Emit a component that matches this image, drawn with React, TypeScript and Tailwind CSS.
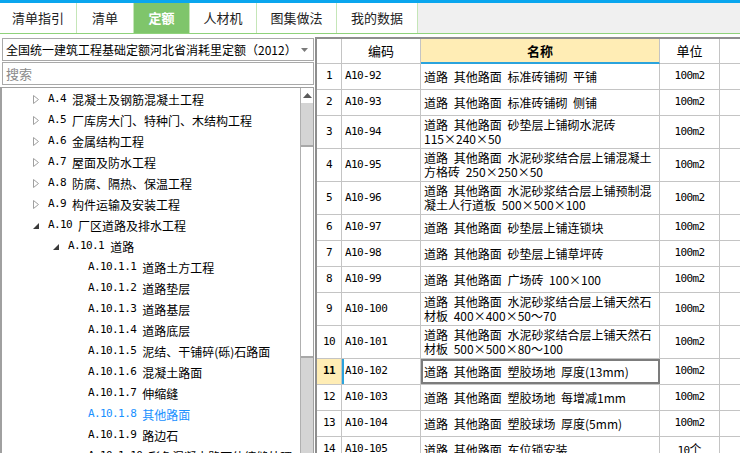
import React from "react";

const CJK = "[font-family:'Noto_Sans_CJK_SC',sans-serif]";
const MONO = "[font-family:'DejaVu_Sans_Mono',monospace] text-[11px] tracking-[-0.6px]";

const tabs = [
  { label: "清单指引", w: "w-[77px]" },
  { label: "清单", w: "w-[57px]" },
  { label: "定额", w: "w-[56px]", active: true },
  { label: "人材机", w: "w-[67px]" },
  { label: "图集做法", w: "w-[80px]" },
  { label: "我的数据", w: "w-[81px]" },
];

type TreeItem = {
  code: string;
  name: string;
  indent: string;
  state?: "closed" | "open";
  active?: boolean;
};

const tree: TreeItem[] = [
  { code: "A.4", name: "混凝土及钢筋混凝土工程", indent: "pl-[31px]", state: "closed" },
  { code: "A.5", name: "厂库房大门、特种门、木结构工程", indent: "pl-[31px]", state: "closed" },
  { code: "A.6", name: "金属结构工程", indent: "pl-[31px]", state: "closed" },
  { code: "A.7", name: "屋面及防水工程", indent: "pl-[31px]", state: "closed" },
  { code: "A.8", name: "防腐、隔热、保温工程", indent: "pl-[31px]", state: "closed" },
  { code: "A.9", name: "构件运输及安装工程", indent: "pl-[31px]", state: "closed" },
  { code: "A.10", name: "厂区道路及排水工程", indent: "pl-[31px]", state: "open" },
  { code: "A.10.1", name: "道路", indent: "pl-[51px]", state: "open" },
  { code: "A.10.1.1", name: "道路土方工程", indent: "pl-[86px]" },
  { code: "A.10.1.2", name: "道路垫层", indent: "pl-[86px]" },
  { code: "A.10.1.3", name: "道路基层", indent: "pl-[86px]" },
  { code: "A.10.1.4", name: "道路底层", indent: "pl-[86px]" },
  { code: "A.10.1.5", name: "泥结、干铺碎(砾)石路面", indent: "pl-[86px]" },
  { code: "A.10.1.6", name: "混凝土路面", indent: "pl-[86px]" },
  { code: "A.10.1.7", name: "伸缩缝", indent: "pl-[86px]" },
  { code: "A.10.1.8", name: "其他路面", indent: "pl-[86px]", active: true },
  { code: "A.10.1.9", name: "路边石", indent: "pl-[86px]" },
  { code: "A.10.1.10", name: "彩色混凝土路面伸缩缝处理", indent: "pl-[86px]" },
];

type Row = { no: number; code: string; lines: string[]; unit: string; selected?: boolean };

const rows: Row[] = [
  { no: 1, code: "A10-92", lines: ["道路 其他路面 标准砖铺砌 平铺"], unit: "100m2" },
  { no: 2, code: "A10-93", lines: ["道路 其他路面 标准砖铺砌 侧铺"], unit: "100m2" },
  { no: 3, code: "A10-94", lines: ["道路 其他路面 砂垫层上铺砌水泥砖", "115×240×50"], unit: "100m2" },
  { no: 4, code: "A10-95", lines: ["道路 其他路面 水泥砂浆结合层上铺混凝土", "方格砖 250×250×50"], unit: "100m2" },
  { no: 5, code: "A10-96", lines: ["道路 其他路面 水泥砂浆结合层上铺预制混", "凝土人行道板 500×500×100"], unit: "100m2" },
  { no: 6, code: "A10-97", lines: ["道路 其他路面 砂垫层上铺连锁块"], unit: "100m2" },
  { no: 7, code: "A10-98", lines: ["道路 其他路面 砂垫层上铺草坪砖"], unit: "100m2" },
  { no: 8, code: "A10-99", lines: ["道路 其他路面 广场砖 100×100"], unit: "100m2" },
  { no: 9, code: "A10-100", lines: ["道路 其他路面 水泥砂浆结合层上铺天然石", "材板 400×400×50～70"], unit: "100m2" },
  { no: 10, code: "A10-101", lines: ["道路 其他路面 水泥砂浆结合层上铺天然石", "材板 500×500×80～100"], unit: "100m2" },
  { no: 11, code: "A10-102", lines: ["道路 其他路面 塑胶场地 厚度(13mm)"], unit: "100m2", selected: true },
  { no: 12, code: "A10-103", lines: ["道路 其他路面 塑胶场地 每增减1mm"], unit: "100m2" },
  { no: 13, code: "A10-104", lines: ["道路 其他路面 塑胶球场 厚度(5mm)"], unit: "100m2" },
  { no: 14, code: "A10-105", lines: ["道路 其他路面 车位锁安装"], unit: "10个" },
];

function TreeRow({ item }: { item: TreeItem }) {
  return (
    <div className={`flex h-[21px] shrink-0 items-center whitespace-nowrap ${item.indent} ${item.active ? "text-[#1890ff]" : "text-black"}`}>
      {item.state === "closed" && (
        <svg className="mr-[9px]" width="6" height="9" viewBox="0 0 6 9">
          <path d="M0.5 0.5 L5.5 4.5 L0.5 8.5 Z" fill="white" stroke="#a0a0a0" />
        </svg>
      )}
      {item.state === "open" && (
        <svg className="mr-[9px]" width="6" height="6" viewBox="0 0 6 6">
          <path d="M6 0 L6 6 L0 6 Z" fill="#3a3a3a" />
        </svg>
      )}
      <span className={MONO}>{item.code}</span>
      <span className="ml-[6px] text-[12px]">{item.name}</span>
    </div>
  );
}

function TableRow({ row }: { row: Row }) {
  const tall = row.lines.length > 1;
  return (
    <div className={`flex shrink-0 border-b border-[#c4c4c4] ${tall ? "h-[33px]" : "h-[26px]"}`}>
      <div
        className={`flex w-[25px] items-center justify-center border-r border-[#c4c4c4] ${MONO} ${
          row.selected ? "bg-[#ffedb5] font-bold" : ""
        }`}
      >
        {row.no}
      </div>
      <div
        className={`flex w-[79px] items-center border-r border-[#c4c4c4] pl-[3px] ${MONO} ${
          row.selected ? "shadow-[inset_2px_0_0_#2ba3dc]" : ""
        }`}
      >
        {row.code}
      </div>
      <div
        className={`flex w-[239px] flex-col justify-center border-r border-[#c4c4c4] pl-[3px] text-[12px] leading-[14px] whitespace-nowrap [word-spacing:3px] ${
          row.selected ? "outline-2 -outline-offset-2 outline-[#7c7c7c]" : ""
        }`}
      >
        {row.lines.map((l) => (
          <div key={l}>{l}</div>
        ))}
      </div>
      <div className={`flex w-[60px] items-center justify-center border-r border-[#c4c4c4] ${MONO}`}>
        {row.unit.endsWith("个") ? (
          <span>
            10<span className={`${CJK} text-[12px] tracking-normal`}>个</span>
          </span>
        ) : (
          row.unit
        )}
      </div>
      <div className="flex-1" />
    </div>
  );
}

export default function App() {
  return (
    <div className={`flex h-[453px] w-[740px] flex-col overflow-hidden bg-white text-black ${CJK}`}>
      <div className="h-[3px] shrink-0 bg-[#0aa6ee]" />
      <div className="flex h-[31px] shrink-0 border-b border-[#8fd27b] bg-[#f0f0f0]">
        {tabs.map((t) => (
          <div
            key={t.label}
            className={`flex h-full items-center justify-center border-r border-[#c5e6b8] text-[13px] ${t.w} ${
              t.active ? "bg-[#7fc56b] font-bold text-white" : "bg-white text-[#222]"
            }`}
          >
            {t.label}
          </div>
        ))}
      </div>

      <div className="flex min-h-0 flex-1">
        {/* left: quota library tree */}
        <div className="flex w-[314px] shrink-0 flex-col pt-[4px]">
          <div className="ml-[2px] flex h-[23px] shrink-0 items-center justify-between border border-[#a9a9a9] pl-[3px] pr-[5px] text-[12px] whitespace-nowrap">
            <span>全国统一建筑工程基础定额河北省消耗里定额（2012）</span>
            <svg width="7" height="4" viewBox="0 0 7 4">
              <path d="M0 0 L7 0 L3.5 4 Z" fill="#7a7a7a" />
            </svg>
          </div>
          <div className="ml-[2px] mt-[1px] flex h-[23px] shrink-0 items-center border border-[#a9a9a9] pl-[3px] text-[13px] text-[#8a8a8a]">
            搜索
          </div>
          <div className="mt-[2px] flex min-h-0 flex-1 border-t border-r border-l-2 border-[#a0a0a0]">
            <div className="flex min-w-0 flex-1 flex-col overflow-hidden pt-[1px]">
              {tree.map((it) => (
                <TreeRow key={it.code} item={it} />
              ))}
            </div>
            <div className="flex w-[13px] shrink-0 flex-col border-l border-[#b0b0b0]">
              <div className="flex h-[15px] shrink-0 items-center justify-center bg-white">
                <svg width="9" height="5" viewBox="0 0 9 5">
                  <path d="M0 5 L4.5 0 L9 5 Z" fill="#5a5a5a" />
                </svg>
              </div>
              <div className="h-[42px] shrink-0 bg-[#d4d4d4]" />
              <div className="h-[213px] shrink-0 border-t-2 border-b-2 border-[#a8a8a8] bg-white" />
              <div className="flex-1 bg-[#d4d4d4]" />
            </div>
          </div>
        </div>

        {/* right: quota items grid */}
        <div className="ml-[1px] flex min-w-0 flex-1 flex-col pt-[3px]">
          <div className="flex min-h-0 flex-1 flex-col border-t-2 border-l-2 border-[#8e8e8e]">
            <div className="flex h-[25px] shrink-0 text-[13px]">
              <div className="w-[25px] border-r border-b border-[#c4c4c4]" />
              <div className="flex w-[79px] items-center justify-center border-r border-b border-[#c4c4c4]">编码</div>
              <div className="flex w-[239px] items-center justify-center border-r border-b-2 border-r-[#c4c4c4] border-b-[#2ba3dc] bg-[#ffedb5] font-bold">
                名称
              </div>
              <div className="flex w-[60px] items-center justify-center border-r border-b border-[#c4c4c4]">单位</div>
              <div className="flex-1 border-b border-[#c4c4c4]" />
            </div>
            {rows.map((r) => (
              <TableRow key={r.no} row={r} />
            ))}
          </div>
        </div>
      </div>
    </div>
  );
}
